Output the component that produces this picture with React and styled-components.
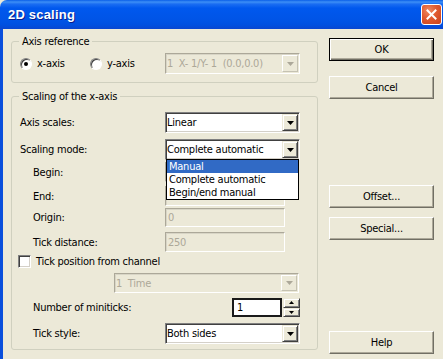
import React from "react";
import styled, { createGlobalStyle } from "styled-components";

const GlobalStyle = createGlobalStyle`
  html, body {
    margin: 0;
    padding: 0;
    background: #ece9d8;
  }
  body {
    font-family: "DejaVu Sans Condensed", "Liberation Sans", sans-serif;
    font-size: 11px;
    letter-spacing: -0.25px;
    color: #000;
  }
`;

const Window = styled.div`
  width: 443px;
  height: 359px;
  overflow: hidden;
  display: flex;
  flex-direction: column;
  background: #ece9d8;
`;

const TitleBar = styled.div`
  height: 29px;
  flex: none;
  display: flex;
  align-items: center;
  justify-content: space-between;
  padding: 0 1px 0 8px;
  border-radius: 7px 0 0 0;
  background: linear-gradient(
    to bottom,
    #0a5fe8 0%,
    #3d8ff6 7%,
    #1a6df2 14%,
    #0058ee 28%,
    #0054e6 70%,
    #0050e0 86%,
    #0a46d0 100%
  );
`;

const Title = styled.span`
  font-family: "Liberation Sans", sans-serif;
  font-weight: bold;
  font-size: 13px;
  letter-spacing: 0.2px;
  color: #fff;
  text-shadow: 1px 1px 0 #0a1e8c;
`;

const CloseButton = styled.div`
  width: 21px;
  height: 21px;
  box-sizing: border-box;
  border: 1px solid #fff;
  border-radius: 3px;
  background: radial-gradient(circle at 35% 30%, #f08a62 0%, #e05a30 45%, #c8401c 100%);
  display: flex;
  align-items: center;
  justify-content: center;
`;

const Frame = styled.div`
  flex: 1;
  display: flex;
  border-left: 3px solid #0a4fdc;
  padding-left: 8px;
`;

const LeftCol = styled.div`
  width: 307px;
  display: flex;
  flex-direction: column;
`;

const Group = styled.div`
  position: relative;
  border: 1px solid #d0d0bf;
  border-radius: 3px;
  margin-top: ${(p) => p.$mt}px;
  padding: ${(p) => p.$pad};
`;

const Caption = styled.span`
  position: absolute;
  top: -7px;
  left: 7px;
  padding: 0 3px;
  line-height: 13px;
  background: #ece9d8;
`;

const Row = styled.div`
  display: flex;
  align-items: center;
  height: ${(p) => p.$h}px;
  margin-top: ${(p) => p.$mt || 0}px;
  padding-left: ${(p) => p.$pl || 0}px;
  position: ${(p) => (p.$raised ? "relative" : "static")};
  z-index: ${(p) => (p.$raised ? 2 : "auto")};
`;

const Label = styled.span`
  width: ${(p) => p.$w || 145}px;
  padding-left: ${(p) => p.$indent || 0}px;
  box-sizing: border-box;
  white-space: nowrap;
`;

const RadioLabel = styled.label`
  width: ${(p) => p.$w}px;
  display: flex;
  align-items: center;
  gap: 5px;
`;

const RadioDot = styled.span`
  width: 12px;
  height: 12px;
  box-sizing: border-box;
  border-radius: 50%;
  background: #fff;
  border: 1px solid;
  border-color: #808080 #fff #fff #808080;
  box-shadow: inset 1px 1px 0 #404040;
  display: flex;
  align-items: center;
  justify-content: center;

  &::after {
    content: "";
    width: 4px;
    height: 4px;
    border-radius: 50%;
    background: ${(p) => (p.$checked ? "#000" : "transparent")};
  }
`;

const Checkbox = styled.span`
  width: 13px;
  height: 13px;
  box-sizing: border-box;
  margin-left: -2px;
  margin-right: 5px;
  background: #fff;
  border: 1px solid;
  border-color: #808080 #fff #fff #808080;
  box-shadow: inset 1px 1px 0 #404040, inset -1px -1px 0 #d4d0c8;
`;

const Field = styled.div`
  position: relative;
  width: ${(p) => p.$w}px;
  height: 100%;
  box-sizing: border-box;
  display: flex;
  align-items: center;
  background: ${(p) => (p.$disabled ? "#ece9d8" : "#fff")};
  color: ${(p) => (p.$disabled ? "#aca899" : "#000")};
  border: 1px solid;
  border-color: ${(p) =>
    p.$disabled ? "#aca899 #fff #fff #aca899" : "#808080 #fff #fff #808080"};
  box-shadow: ${(p) =>
    p.$disabled
      ? "inset 1px 1px 0 #d8d5c6, inset -1px -1px 0 #ece9d8"
      : "inset 1px 1px 0 #404040, inset -1px -1px 0 #d4d0c8"};
`;

const SpinField = styled(Field)`
  border: 2px solid #1a1a1a;
  box-shadow: none;
`;

const FieldText = styled.span`
  flex: 1;
  padding-left: ${(p) => p.$pl ?? 2}px;
  white-space: pre;
  overflow: hidden;
`;

const DropButton = styled.span`
  width: 16px;
  align-self: stretch;
  margin: 1px 1px 1px 0;
  box-sizing: border-box;
  background: #ece9d8;
  border: 1px solid;
  border-color: ${(p) => (p.$disabled ? "#fff #c5c2b2 #c5c2b2 #fff" : "#ece9d8 #404040 #404040 #ece9d8")};
  box-shadow: ${(p) =>
    p.$disabled ? "none" : "inset 1px 1px 0 #fff, inset -1px -1px 0 #808080"};
  display: flex;
  align-items: center;
  justify-content: center;
`;

const DropList = styled.div`
  position: absolute;
  top: 100%;
  left: 0;
  width: 100%;
  box-sizing: border-box;
  border: 1px solid #000;
  background: #fff;
  z-index: 2;
`;

const DropItem = styled.div`
  height: 13px;
  line-height: 13px;
  padding-left: 2px;
  white-space: nowrap;
  background: ${(p) => (p.$selected ? "#316ac5" : "#fff")};
  color: ${(p) => (p.$selected ? "#fff" : "#000")};
`;

const Spinner = styled.div`
  width: 17px;
  height: 100%;
  margin-left: 1px;
  display: flex;
  flex-direction: column;
`;

const SpinButton = styled.span`
  flex: 1;
  box-sizing: border-box;
  background: #ece9d8;
  border: 1px solid;
  border-color: #ece9d8 #404040 #404040 #ece9d8;
  box-shadow: inset 1px 1px 0 #fff, inset -1px -1px 0 #808080;
  display: flex;
  align-items: center;
  justify-content: center;
`;

const ButtonCol = styled.div`
  width: 105px;
  margin-left: 11px;
  display: flex;
  flex-direction: column;
`;

const Button = styled.div`
  height: 23px;
  margin-top: ${(p) => p.$mt}px;
  box-sizing: border-box;
  display: flex;
  align-items: center;
  justify-content: center;
  background: #ece9d8;
  border: 1px solid;
  border-color: ${(p) => (p.$default ? "#000" : "#fff #716f64 #716f64 #fff")};
  box-shadow: ${(p) =>
    p.$default
      ? "inset 1px 1px 0 #fff, inset -1px -1px 0 #716f64, inset -2px -2px 0 #aca899"
      : "inset -1px -1px 0 #aca899"};
`;

const Arrow = ({ color = "#000", up = false, w = 7, h = 4 }) => (
  <svg width={w} height={h} viewBox={`0 0 ${w} ${h}`}>
    <polygon
      points={up ? `0,${h} ${w},${h} ${w / 2},0` : `0,0 ${w},0 ${w / 2},${h}`}
      fill={color}
    />
  </svg>
);

const Combo = ({ w, text, disabled, children }) => (
  <Field $w={w} $disabled={disabled}>
    <FieldText $pl={1}>{text}</FieldText>
    <DropButton $disabled={disabled}>
      <Arrow color={disabled ? "#aca899" : "#000"} />
    </DropButton>
    {children}
  </Field>
);

export default function App() {
  return (
    <>
      <GlobalStyle />
      <Window>
        <TitleBar>
          <Title>2D scaling</Title>
          <CloseButton>
            <svg width="11" height="11" viewBox="0 0 11 11">
              <path d="M1.5 1.5 L9.5 9.5 M9.5 1.5 L1.5 9.5" stroke="#fff" strokeWidth="2" strokeLinecap="square" />
            </svg>
          </CloseButton>
        </TitleBar>
        <Frame>
          <LeftCol>
            <Group $mt={12} $pad="11px 8px 8px 8px">
              <Caption>Axis reference</Caption>
              <Row $h={21}>
                <RadioLabel $w={70}>
                  <RadioDot $checked />
                  x-axis
                </RadioLabel>
                <RadioLabel $w={75}>
                  <RadioDot />
                  y-axis
                </RadioLabel>
                <Combo w={135} text="1  X- 1/Y- 1  (0.0,0.0)" disabled />
              </Row>
            </Group>

            <Group $mt={13} $pad="15px 8px 5px 8px">
              <Caption>Scaling of the x-axis</Caption>
              <Row $h={21}>
                <Label>Axis scales:</Label>
                <Combo w={135} text="Linear" />
              </Row>
              <Row $h={21} $mt={6} $raised>
                <Label>Scaling mode:</Label>
                <Combo w={135} text="Complete automatic">
                  <DropList>
                    <DropItem $selected>Manual</DropItem>
                    <DropItem>Complete automatic</DropItem>
                    <DropItem>Begin/end manual</DropItem>
                  </DropList>
                </Combo>
              </Row>
              <Row $h={20} $mt={2}>
                <Label $indent={13}>Begin:</Label>
                <Field $w={120} $disabled />
              </Row>
              <Row $h={20} $mt={4}>
                <Label $indent={13}>End:</Label>
                <Field $w={120} $disabled />
              </Row>
              <Row $h={19} $mt={2}>
                <Label $indent={13}>Origin:</Label>
                <Field $w={120} $disabled>
                  <FieldText>0</FieldText>
                </Field>
              </Row>
              <Row $h={20} $mt={5}>
                <Label $indent={13}>Tick distance:</Label>
                <Field $w={120} $disabled>
                  <FieldText>250</FieldText>
                </Field>
              </Row>
              <Row $h={13} $mt={3}>
                <Checkbox />
                <span>Tick position from channel</span>
              </Row>
              <Row $h={20} $mt={5} $pl={94}>
                <Combo w={185} text="1  Time" disabled />
              </Row>
              <Row $h={19} $mt={5}>
                <Label $indent={13} $w={212}>Number of miniticks:</Label>
                <SpinField $w={50}>
                  <FieldText $pl={3}>1</FieldText>
                </SpinField>
                <Spinner>
                  <SpinButton>
                    <Arrow up w={5} h={3} />
                  </SpinButton>
                  <SpinButton>
                    <Arrow w={5} h={3} />
                  </SpinButton>
                </Spinner>
              </Row>
              <Row $h={21} $mt={6}>
                <Label $indent={13}>Tick style:</Label>
                <Combo w={135} text="Both sides" />
              </Row>
            </Group>
          </LeftCol>

          <ButtonCol>
            <Button $default $mt={9}>OK</Button>
            <Button $mt={15}>Cancel</Button>
            <Button $mt={86}>Offset...</Button>
            <Button $mt={9}>Special...</Button>
            <Button $mt={91}>Help</Button>
          </ButtonCol>
        </Frame>
      </Window>
    </>
  );
}
